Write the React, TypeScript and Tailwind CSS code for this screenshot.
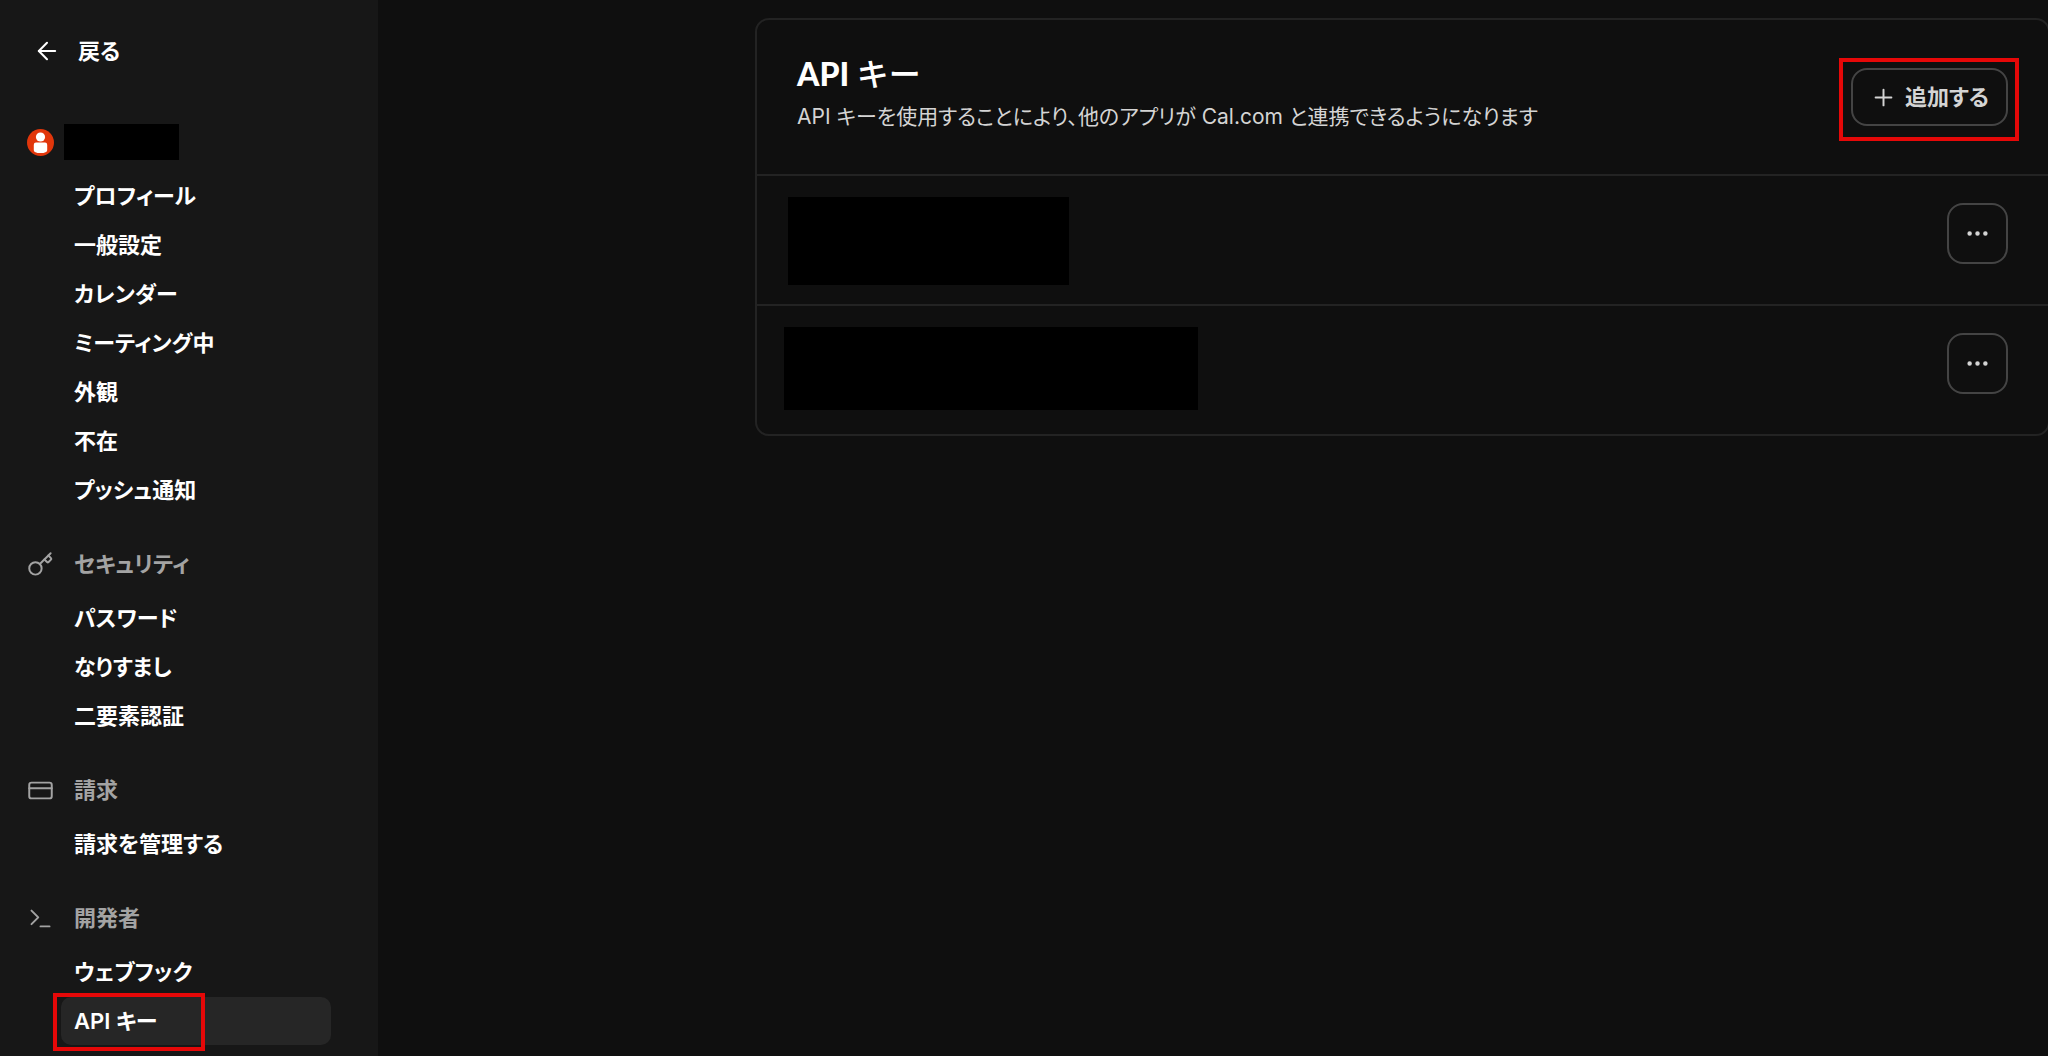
import type { ReactNode } from 'react'
import { ArrowLeft, CreditCard, Ellipsis, Key, Plus, Terminal } from 'lucide-react'

const accountItems = ['プロフィール', '一般設定', 'カレンダー', 'ミーティング中', '外観', '不在', 'プッシュ通知']

const sections = [
  {
    title: 'セキュリティ',
    Icon: Key,
    items: ['パスワード', 'なりすまし', '二要素認証'],
  },
  {
    title: '請求',
    Icon: CreditCard,
    items: ['請求を管理する'],
  },
  {
    title: '開発者',
    Icon: Terminal,
    items: ['ウェブフック', 'API キー'],
  },
]

function Avatar() {
  return (
    <svg width="27" height="27" viewBox="0 0 27 27" aria-hidden="true">
      <circle cx="13.5" cy="13.5" r="13.5" fill="#e1360b" />
      <circle cx="13.5" cy="8" r="4.6" fill="#fff" />
      <path d="M9 13.6h9q2.2 0 2.2 2.2v5.4q0 2.8-6.7 2.8t-6.7-2.8v-5.4q0-2.2 2.2-2.2z" fill="#fff" />
    </svg>
  )
}

// Red frame drawn around whatever it wraps
function Highlight({ className, children }: { className: string; children: ReactNode }) {
  return (
    <div className="relative">
      {children}
      <div className={`pointer-events-none absolute border-4 border-[#e60808] ${className}`} />
    </div>
  )
}

function NavItem({ label, active = false }: { label: string; active?: boolean }) {
  return (
    <a
      href="#"
      aria-current={active ? 'page' : undefined}
      className={`flex h-12 items-center rounded-[10px] px-[13px] text-white ${active ? 'bg-[#262626]' : ''}`}
    >
      {label}
    </a>
  )
}

function NavList({ items }: { items: string[] }) {
  return (
    <ul className="ml-[34px] flex flex-col gap-px">
      {items.map((label) => (
        <li key={label}>
          {label === 'API キー' ? (
            <Highlight className="-top-1 -left-2 h-[58px] w-[152px]">
              <NavItem label={label} active />
            </Highlight>
          ) : (
            <NavItem label={label} />
          )}
        </li>
      ))}
    </ul>
  )
}

function Sidebar() {
  return (
    <nav className="w-[378px] shrink-0 bg-[#171717] pt-[27px] pr-[47px] pl-[27px] font-semibold">
      <a href="#" className="flex h-12 items-center gap-[17px] pl-1.5 text-white">
        <ArrowLeft size={28} strokeWidth={1.75} />
        戻る
      </a>

      <div className="mt-[49px] mb-3 flex h-9 items-center gap-2.5">
        <Avatar />
        <div className="h-9 w-[115px] bg-black" />
      </div>
      <NavList items={accountItems} />

      {sections.map(({ title, Icon, items }) => (
        <section key={title} className="mt-8">
          <h2 className="mb-3 flex h-9 items-center gap-5 text-[#a3a3a3]">
            <Icon size={27} strokeWidth={1.75} />
            {title}
          </h2>
          <NavList items={items} />
        </section>
      ))}
    </nav>
  )
}

function KeyRow({ children }: { children: ReactNode }) {
  return (
    <li className="flex items-start justify-between border-t-2 border-[#232323] pr-10">
      {children}
      <button
        type="button"
        aria-label="オプション"
        className="mt-[27px] mb-10 flex size-[61px] items-center justify-center rounded-2xl border-2 border-[#444] text-[#d4d4d4]"
      >
        <Ellipsis size={27} strokeWidth={2} />
      </button>
    </li>
  )
}

export default function App() {
  return (
    <div
      lang="ja"
      className="flex min-h-screen bg-[#0f0f0f] font-[Inter,'Noto_Sans_CJK_JP',sans-serif] text-[22px] leading-8 [font-feature-settings:'palt']"
    >
      <Sidebar />
      <main className="flex-1 overflow-hidden pt-[18px] pl-[377px]">
        <div className="-mr-0.5 rounded-[14px] border-2 border-[#232323]">
          <header className="flex items-start justify-between pr-10 pb-[41px] pl-10">
            <div className="pt-8">
              <h1 className="font-[Lato,'Noto_Sans_CJK_JP',sans-serif] text-[32px] leading-11 font-black text-white [font-feature-settings:normal]">
                API <span className="font-medium">キー</span>
              </h1>
              <p className="mt-[5px] text-[21px] text-[#d4d4d4]">
                API キーを使用することにより、他のアプリが Cal.com と連携できるようになります
              </p>
            </div>
            <div className="pt-12">
              <Highlight className="-top-2.5 -right-[11px] -left-3 h-[83px]">
                <button
                  type="button"
                  className="flex h-[58px] items-center gap-2 rounded-2xl border-2 border-[#444] px-[17px] font-semibold whitespace-nowrap text-[#d4d4d4]"
                >
                  <Plus size={27} strokeWidth={1.75} />
                  追加する
                </button>
              </Highlight>
            </div>
          </header>
          <ul>
            <KeyRow>
              <div className="mt-[21px] ml-[31px] h-[88px] w-[281px] bg-black" />
            </KeyRow>
            <KeyRow>
              <div className="mt-[21px] ml-[27px] h-[83px] w-[414px] bg-black" />
            </KeyRow>
          </ul>
        </div>
      </main>
    </div>
  )
}
